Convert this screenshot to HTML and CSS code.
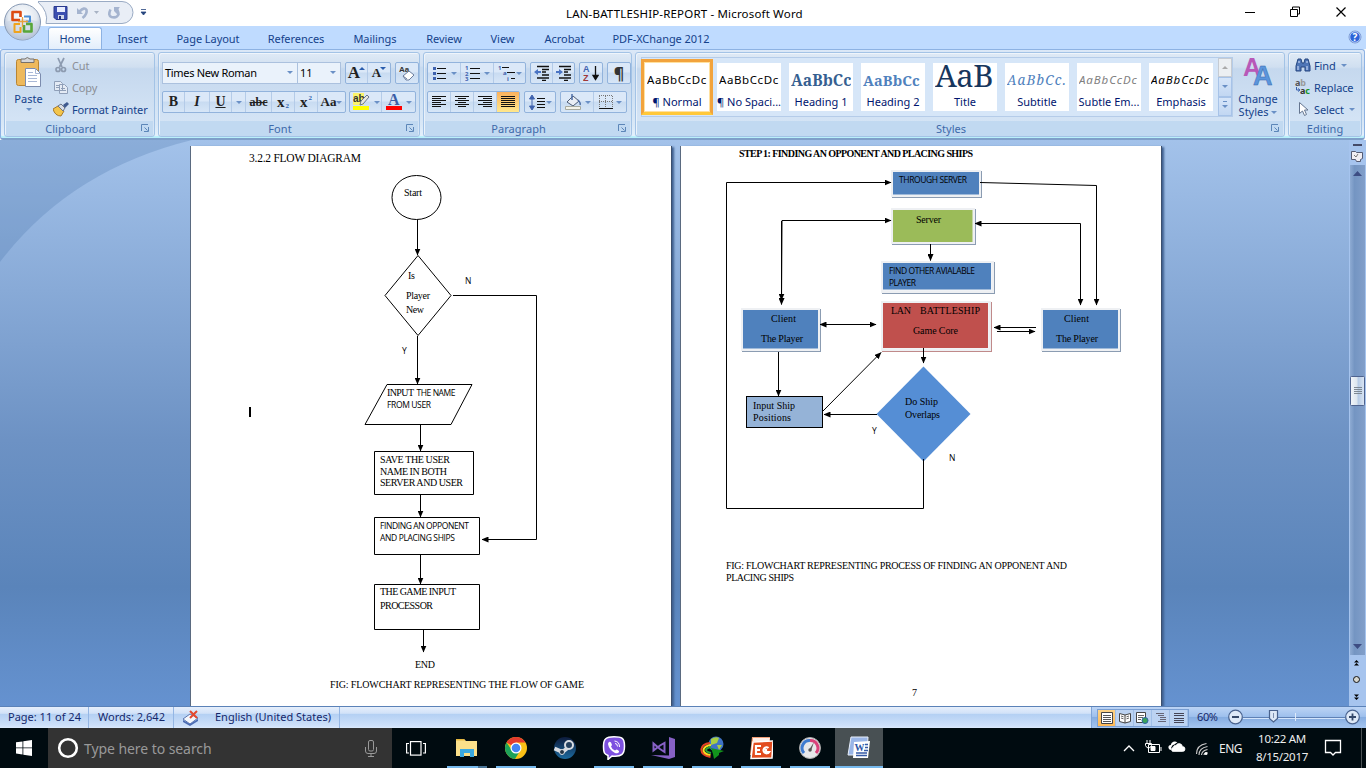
FILE: index.html
```html
<!DOCTYPE html>
<html lang="en">
<head>
<meta charset="utf-8">
<title>LAN-BATTLESHIP-REPORT - Microsoft Word</title>
<link rel="stylesheet" href="styles.css">
</head>
<body>
<div class="app">
  <header class="titlebar">
    <svg class="quick" width="160" height="26" viewBox="0 0 160 26">
      <path d="M38 1.500H122a11 11 0 0 1 0 22H46Q49 12 38 2" fill="#e9eef6" stroke="#9aabc4"/>
      <path d="M54 6.500h13v13h-11l-2-2z" fill="#3c4fb0" stroke="#2a3a8e"/><path d="M57 7h8v5h-8z" fill="#e8edff"/><path d="M58 15h6v4h-6z" fill="#cfd6e8"/><path d="M59 16h2v3h-2z" fill="#26347c"/>
      <path d="M77 8v6h6z" fill="#a5b4cf"/><path d="M79.500 11.500q5-5 7-1.500 1 4-4 8" fill="none" stroke="#a5b4cf" stroke-width="2.600"/>
      <path d="M94 11h5l-2.500 3z" fill="#a8b3c4"/>
      <path d="M110.500 9.500q-3 6 1 7.500 5 1.500 7-2.500 0-4-3-5.500" fill="none" stroke="#a5b4cf" stroke-width="2.600"/><path d="M114 7h6l-1 1-2 6-3-3z" fill="#a5b4cf"/>
      <path d="M141 9.500h5M141 12h5l-2.500 3z" fill="#26457e" stroke="#26457e" stroke-width=".8"/>
    </svg>
    <h1 class="title">LAN-BATTLESHIP-REPORT - Microsoft Word</h1>
    <svg class="winbtns" width="126" height="26" viewBox="1237 0 126 26" fill="none" stroke="#000"><path d="M1242 12.500h10M1287.500 9.500h7v7h-7zM1289.500 9v-2h7v7h-2"/><path d="M1333.500 7.500l9 9M1342.500 7.500l-9 9" stroke-width="1.200"/></svg>
  </header>
  <svg class="orb" width="42" height="42" viewBox="0 0 42 42">
    <defs><radialGradient id="og" cx=".5" cy=".35" r=".65"><stop offset="0" stop-color="#fff"/><stop offset=".6" stop-color="#e3e9f1"/><stop offset="1" stop-color="#9dafc9"/></radialGradient></defs>
    <circle cx="20.500" cy="21" r="18" fill="url(#og)" stroke="#8799b4"/>
    <path d="M3 21q18-6 35 0-2 17-17 18Q5 38 3 21" fill="#c6d2e3" opacity=".55"/>
    <g fill="none" stroke-width="2.600" stroke-linejoin="round"><path d="M18 19h-7.500v-8h8v5" stroke="#dd4b12"/><path d="M22 15.500h6v5h-4" stroke="#4b8ed6" stroke-width="2"/><path d="M18 23h-5.500v8h6v-5" stroke="#f0a31c" stroke-width="2"/><path d="M22 24v6.500h7.500V23H24" stroke="#57a639"/></g>
    <path d="M16 20.500h10M20.500 16v10" stroke="#e7a03a" stroke-width="1.300"/>
  </svg>
  <nav class="tabs">
    <a class="tab active t1">Home</a><a class="tab t2">Insert</a><a class="tab t3">Page Layout</a><a class="tab t4">References</a><a class="tab t5">Mailings</a><a class="tab t6">Review</a><a class="tab t7">View</a><a class="tab t8">Acrobat</a><a class="tab t9">PDF-XChange 2012</a>
    <svg class="help" width="14" height="14" viewBox="0 0 14 14"><circle cx="7" cy="7" r="6" fill="#2c63d8" stroke="#7d9bd0"/><circle cx="7" cy="7" r="5.200" fill="none" stroke="#cfe0ff" stroke-width=".8"/><text x="7" y="10.500" text-anchor="middle" class="qm">?</text></svg>
  </nav>
  <section class="ribbon">
    <div class="group g-clip">
      <div class="body clip">
        <div class="paste">
          <svg width="30" height="32" viewBox="0 0 30 32"><rect x="2.500" y="3.500" width="22" height="26" rx="2" fill="#eeb95c" stroke="#b98533"/><path d="M7 6.500V3h4q2-3 5 0h4v3.500z" fill="#d5d6d8" stroke="#77716a"/><path d="M11.500 12.500h10l5 5v13h-15z" fill="#fff" stroke="#7c8cae"/><path d="M21.500 12.500v5h5M14 16.500h5M14 19.500h9M14 22.500h9M14 25.500h9" fill="none" stroke="#a9b8d6"/></svg>
          <span>Paste</span><i class="dd"></i>
        </div>
        <div class="list">
          <div class="cmd off"><svg width="16" height="16" viewBox="0 0 16 16" fill="none" stroke="#8d9bb0" stroke-width="1.700"><path d="M5 1l4 9M11 1L6.500 10"/><circle cx="5" cy="12.500" r="2"/><circle cx="10.500" cy="12.500" r="2"/></svg><span>Cut</span></div>
          <div class="cmd off"><svg width="16" height="16" viewBox="0 0 16 16" fill="#e4ebf5" stroke="#8f9fb8"><path d="M1.500 2.500h6l2 2v7h-8zM6.500 5.500h5l3 3v6h-8z"/><path d="M3 6.500h3M3 8.500h3M8 9.500h4M8 11.500h5"/></svg><span>Copy</span></div>
          <div class="cmd"><svg width="16" height="16" viewBox="0 0 16 16"><path d="M0 8l5-3 6 5-3 5q-6 0-8-7z" fill="#f3c54b" stroke="#a8792a"/><path d="M5 5l3-2 4 4-2 3z" fill="#d8dde5" stroke="#6a7488"/><path d="M10 4l4-3 2 2-4 4z" fill="#3e5a90"/></svg><span>Format Painter</span></div>
        </div>
      </div>
      <footer>Clipboard<svg class="dlg"><use href="#dl"/></svg></footer>
    </div>
    <div class="group g-font">
      <div class="body rows">
        <div class="row">
          <div class="combo c1"><span>Times New Roman</span><i class="dd"></i></div><div class="combo c2"><span>11</span><i class="dd"></i></div>
          <div class="box m4"><b class="btn ser w22 big">A<i class="dd tri up blue"></i></b><b class="btn ser w22 mid">A<i class="dd tri blue"></i></b></div>
          <div class="box m4"><span class="btn w22"><svg width="18" height="18" viewBox="0 0 18 18"><text x="1" y="8" class="aa">Aa</text><path d="M5 12l6-5 5 4-5 5H8z" fill="#fff" stroke="#6c7d9d"/><path d="M5 12l4 3" stroke="#6c7d9d"/></svg></span></div>
        </div>
        <div class="row">
          <div class="box"><b class="btn ser w22">B</b><b class="btn ser w25 it">I</b><b class="btn ser w22 un">U</b><span class="btn w14"><i class="dd"></i></span><b class="btn ser w26 st">abc</b><b class="btn ser w23">x<sub>2</sub></b><b class="btn ser w23">x<sup>2</sup></b><b class="btn ser w27">Aa<i class="dd"></i></b></div>
          <div class="box m3"><span class="btn w32"><svg width="19" height="18" viewBox="0 0 19 18"><path d="M1 0h11v12H1z" fill="#fbf36b"/><text x="1" y="8.500" class="ab">ab</text><path d="M8 12l1-4 6-6 2 2-6 7z" fill="#e8e8df" stroke="#68758b"/><path d="M1 13h16v4H1z" fill="#ff0"/></svg><i class="dd"></i></span><span class="btn w33"><svg width="18" height="18" viewBox="0 0 18 18"><text x="3" y="12" class="fa">A</text><path d="M1 13h16v4H1z" fill="red"/></svg><i class="dd"></i></span></div>
        </div>
      </div>
      <footer>Font<svg class="dlg"><use href="#dl"/></svg></footer>
    </div>
    <div class="group g-para">
      <div class="body rows">
        <div class="row">
          <div class="box"><span class="btn w33"><svg width="16" height="16" viewBox="0 0 16 16"><path d="M5 3.500h9M5 8.500h9M5 13.500h9" stroke="#111"/><path d="M1 2h3v3H1zM1 7h3v3H1zM1 12h3v3H1z" fill="#3f62ae"/></svg><i class="dd"></i></span><span class="btn w33"><svg width="16" height="16" viewBox="0 0 16 16"><path d="M5 3.500h10M5 8.500h10M5 13.500h10" stroke="#111"/><text class="num" x="0" y="5">1</text><text class="num" x="0" y="10.500">2</text><text class="num" x="0" y="16">3</text></svg><i class="dd"></i></span><span class="btn w31"><svg width="18" height="16" viewBox="0 0 18 16"><path d="M4 2.500h7M9 7.500h8M13 13.500h4" stroke="#111"/><text class="num" x="0" y="5">1</text><text class="num" x="5" y="10">a</text><text class="num" x="9" y="16">i</text></svg><i class="dd"></i></span></div>
          <div class="box m4"><span class="btn w22"><svg width="16" height="16" viewBox="0 0 16 16"><path d="M3 1.500h12M8 4.500h7M8 7h4M8 10h7M3 13h12M8 15.500h4" stroke="#111" stroke-width="1.600"/><path d="M0 7l4-3v2h3v2H4v2z" fill="#4a74c4"/></svg></span><span class="btn w21"><svg width="16" height="16" viewBox="0 0 16 16"><path d="M3 1.500h12M8 4.500h7M8 7h4M8 10h7M3 13h12M8 15.500h4" stroke="#111" stroke-width="1.600"/><path d="M7 7L3 4v2H0v2h3v2z" fill="#4a74c4"/></svg></span></div>
          <div class="box m4"><span class="btn w22"><svg width="16" height="16" viewBox="0 0 16 16"><text x="0" y="7" class="az" fill="#3f62ae">A</text><text x="0" y="16" class="az" fill="#a03838">Z</text><path d="M12.500 1v12M10 10.500l2.500 4 2.500-4z" stroke="#111" stroke-width="1.300"/></svg></span></div>
          <div class="box m4"><span class="btn w22 pil">¶</span></div>
        </div>
        <div class="row">
          <div class="box"><span class="btn w23"><svg class="al" viewBox="0 0 14 12"><path d="M0 .5h14M0 2.500h9M0 4.500h14M0 6.500h9M0 8.500h14M0 10.500h9"/></svg></span><span class="btn w23"><svg class="al" viewBox="0 0 14 12"><path d="M0 .5h14M3 2.500h8M0 4.500h14M3 6.500h8M0 8.500h14M3 10.500h8"/></svg></span><span class="btn w23"><svg class="al" viewBox="0 0 14 12"><path d="M0 .5h14M5 2.500h9M0 4.500h14M5 6.500h9M0 8.500h14M5 10.500h9"/></svg></span><span class="btn w22 on"><svg class="al" viewBox="0 0 14 12"><path d="M0 .5h14M0 2.500h14M0 4.500h14M0 6.500h14M0 8.500h14M0 10.500h14"/></svg></span></div>
          <div class="box m4"><span class="btn w30"><svg width="17" height="17" viewBox="0 0 17 17"><path d="M3 5v7M.5 5L3 1l2.500 4zM.5 12L3 16l2.500-4z" stroke="#3f62ae" fill="#3f62ae"/><path d="M8 4.500h8M8 7.500h8M8 10.500h8M8 13.500h8" stroke="#111"/></svg><i class="dd"></i></span></div>
          <div class="box m4"><span class="btn w33"><svg width="18" height="18" viewBox="0 0 18 18"><path d="M3 9l6-6 6 5-6 5z" fill="#e9eef5" stroke="#4c5a72"/><path d="M8 1v6M14 7q3 3 2 5" fill="none" stroke="#4c6ca5" stroke-width="1.500"/><path d="M1.500 13.500h15v3h-15z" fill="#f3f3ea" stroke="#a8aba0"/></svg><i class="dd"></i></span><span class="btn w32"><svg width="14" height="14" viewBox="0 0 14 14"><path d="M.5 1v12M13.500 1v12M6.500 1v12M0 .5h14M0 6.500h14" stroke="#777" stroke-dasharray="1 1"/><path d="M0 13.500h14" stroke="#111"/></svg><i class="dd"></i></span></div>
        </div>
      </div>
      <footer>Paragraph<svg class="dlg"><use href="#dl"/></svg></footer>
    </div>
    <div class="group g-styles">
      <div class="body styles">
        <div class="gallery">
          <div class="cell sel"><span class="pv">AaBbCcDc</span><span class="nm">¶ Normal</span></div>
          <div class="cell"><span class="pv">AaBbCcDc</span><span class="nm">¶ No Spaci...</span></div>
          <div class="cell"><span class="pv h1">AaBbCc</span><span class="nm">Heading 1</span></div>
          <div class="cell"><span class="pv h2">AaBbCc</span><span class="nm">Heading 2</span></div>
          <div class="cell"><span class="pv ti">AaB</span><span class="nm">Title</span></div>
          <div class="cell"><span class="pv su">AaBbCc.</span><span class="nm">Subtitle</span></div>
          <div class="cell"><span class="pv se">AaBbCcDc</span><span class="nm">Subtle Em...</span></div>
          <div class="cell"><span class="pv em">AaBbCcDc</span><span class="nm">Emphasis</span></div>
          <div class="gscroll"><span class="gray"><i class="dd up"></i></span><span><i class="dd"></i></span><span class="more"><i class="dd"></i></span></div>
        </div>
        <div class="change"><svg width="30" height="30" viewBox="0 0 30 30"><text x="0" y="19" class="ca1">A</text><text x="10" y="28" class="ca2">A</text></svg><span>Change</span><span>Styles <i class="dd"></i></span></div>
      </div>
      <footer>Styles<svg class="dlg"><use href="#dl"/></svg></footer>
    </div>
    <div class="group g-edit">
      <div class="body list edit">
        <div class="cmd"><svg width="16" height="16" viewBox="0 0 16 16"><path d="M3 2h3l1 4h2l1-4h3l2 7v5h-5v-4H6v4H1V9z" fill="#4e75b6" stroke="#264780"/><path d="M3 9v4M12 9v4M4 4v2M12 4v2" stroke="#d7e5ff"/></svg><span>Find</span><i class="dd"></i></div>
        <div class="cmd"><svg width="16" height="16" viewBox="0 0 16 16"><text x="0" y="7" class="rp" fill="#555">a<tspan fill="#999">b</tspan></text><text x="5" y="15" class="rp" fill="#333">a<tspan fill="#18962b">c</tspan></text><path d="M1.500 8v3h3M3 9.500l2 1.500-2 1.500" fill="none" stroke="#3b62ad"/></svg><span>Replace</span></div>
        <div class="cmd"><svg width="16" height="16" viewBox="0 0 16 16"><path d="M4.500 1.500v11l3-2.500 2 4.500 2-1-2-4.500h3.500z" fill="#fff" stroke="#64758f"/></svg><span>Select</span><i class="dd"></i></div>
      </div>
      <footer>Editing</footer>
    </div>
  </section>
  <main class="work">
    <svg class="swoosh" width="680" height="566" viewBox="0 140 680 566" preserveAspectRatio="none"><path d="M0 140H192Q70 170 0 262z" fill="#456fa9" fill-opacity=".25"/></svg>
    <div class="pages">
      <article class="page">
        <svg width="480" height="560" viewBox="191 146 480 560">
          <defs><marker id="ar" viewBox="0 0 7 6" refX="6.500" refY="3" markerWidth="7" markerHeight="6" markerUnits="userSpaceOnUse" orient="auto-start-reverse"><path d="M0 0l7 3-7 3z"/></marker></defs>
          <g class="ln"><ellipse cx="416.500" cy="197.500" rx="24.500" ry="22"/><path d="M418 255.500l33 40-33 40-33-40zM387 384.500h85l-21 40h-86zM374.500 451.500h99v43h-99zM374.500 517.500h105v37h-105zM374.500 584.500h105v45h-105z"/></g>
          <g class="ln ar"><path d="M417.500 220v35"/><path d="M417.500 336v48"/><path d="M453 295.500h83.500v244H482"/><path d="M420.500 425v26"/><path d="M420.500 495v22"/><path d="M420.500 555v29"/><path d="M423.500 630v22"/></g>
          <path d="M250 407v10" stroke="#000" stroke-width="2"/>
          <g class="tx">
            <text class="t11" x="249" y="162" textLength="112">3.2.2 FLOW DIAGRAM</text>
            <text x="404" y="196" textLength="18">Start</text><text x="408" y="279" textLength="7">Is</text><text x="406" y="299" textLength="24">Player</text><text x="406" y="313" textLength="18">New</text>
            <text x="387" y="396" textLength="27">INPUT</text>
            <text x="380" y="463" textLength="70">SAVE THE USER</text><text x="380" y="475" textLength="67">NAME IN BOTH</text><text x="380" y="486" textLength="83">SERVER AND USER</text>
            <text x="380" y="595" textLength="76">THE GAME INPUT</text><text x="380" y="609" textLength="53">PROCESSOR</text><text x="415" y="668" textLength="20">END</text><text x="330" y="688" textLength="254">FIG: FLOWCHART REPRESENTING THE FLOW OF GAME</text>
          </g>
          <g class="sx">
            <text x="465" y="284" textLength="5.500">N</text><text x="402" y="354" textLength="4.500">Y</text>
            <text x="416.500" y="396" textLength="39">THE NAME</text><text x="387" y="408" textLength="44">FROM USER</text><text x="380" y="529" textLength="89">FINDING AN OPPONENT</text><text x="380" y="541" textLength="75">AND PLACING SHIPS</text>
          </g>
        </svg>
      </article>
      <article class="page">
        <svg width="480" height="560" viewBox="681 146 480 560">
          <g class="halo"><rect x="892" y="171" width="88" height="25"/><rect x="892" y="209" width="82" height="34"/><rect x="882" y="262" width="111" height="30"/><rect class="red" x="882" y="302" width="108" height="48"/><rect x="742" y="309" width="77" height="41"/><rect x="1042" y="309" width="77" height="41"/></g>
          <g fill="#4f81bd"><rect x="893" y="172" width="86" height="22.500"/><rect x="893" y="210" width="79.500" height="32" fill="#9bbb59"/><rect x="883" y="263" width="108" height="26.500"/><rect x="883" y="303" width="105" height="45" fill="#c0504d"/><rect x="743" y="310" width="75" height="38.500"/><rect x="1043" y="310" width="75" height="38.500"/></g>
          <path d="M923.500 366.500l47 47.500-47 47.500-47-47.500z" fill="#558ed5"/>
          <rect x="746.500" y="396.500" width="76" height="31" fill="#95b3d7" stroke="#000"/>
          <g class="ln ar"><path d="M923.500 459v49.500h-197v-326H891"/><path d="M980 182.500l116.500 3V305"/><path class="both" d="M781.500 304.500l.5-84h109"/><path d="M781.500 221v79"/><path class="both" d="M975 223.500h105.500V305"/><path d="M930.500 244v16.500"/><path class="both" d="M820 324.500h56"/><path d="M1036 327.500h-42"/><path d="M997 331.500h38"/><path d="M923.500 348v15"/><path d="M778.500 352v44"/><path d="M823 411l58-58.500"/><path d="M877 414.500h-53"/></g>
          <g class="tx">
            <text class="bold" x="739" y="157" textLength="234">STEP 1: FINDING AN OPPONENT AND PLACING SHIPS</text>
            <text x="916" y="223" textLength="25">Server</text><text x="891" y="314" textLength="20">LAN</text><text x="920" y="314" textLength="60">BATTLESHIP</text><text x="913" y="334" textLength="45">Game Core</text>
            <text x="771" y="322" textLength="25">Client</text><text x="761" y="342" textLength="42">The Player</text><text x="1064" y="322" textLength="25">Client</text><text x="1056" y="342" textLength="42">The Player</text>
            <text x="753" y="409" textLength="42">Input Ship</text><text x="753" y="421" textLength="38">Positions</text><text x="905" y="405" textLength="33">Do Ship</text><text x="905" y="418" textLength="35">Overlaps</text>
            <text x="726" y="569" textLength="341">FIG: FLOWCHART REPRESENTING PROCESS OF FINDING AN OPPONENT AND</text><text x="726" y="581" textLength="68">PLACING SHIPS</text><text x="912" y="696">7</text>
          </g>
          <g class="sx"><text x="899" y="183" textLength="68">THROUGH SERVER</text><text x="889" y="274" textLength="86">FIND OTHER AVIALABLE</text><text x="889" y="286" textLength="27">PLAYER</text><text x="872" y="434" textLength="4.500">Y</text><text x="949" y="461" textLength="5.500">N</text></g>
        </svg>
      </article>
    </div>
    <aside class="vscroll">
      <svg width="17" height="566" viewBox="1349 140 17 566">
        <defs><linearGradient id="th"><stop offset="0" stop-color="#f2f6fa"/><stop offset=".45" stop-color="#dde6ee"/><stop offset=".55" stop-color="#b6cbe6"/><stop offset="1" stop-color="#dce7f4"/></linearGradient><linearGradient id="tr"><stop offset="0" stop-color="#8eabd3"/><stop offset=".3" stop-color="#7495c2"/><stop offset="1" stop-color="#829fca"/></linearGradient></defs>
        <path d="M1349 140h17v566h-17z" fill="#a6c4ee"/><path d="M1350 165h15v490h-15z" fill="url(#tr)"/>
        <path d="M1353 144h9v2h-9z" fill="#444a68"/><path d="M1351.500 151.500h4l1 1h6v6l-2 1v2h-4l-1-2h-4z" fill="#f0eef4" stroke="#555b73"/><path d="M1354 155l2 2 2-3" stroke="#777" fill="none"/>
        <path d="M1353 176l4.500-5 4.500 5zM1353 644h9l-4.500 5z" fill="#3d4d83"/>
        <rect x="1350.500" y="376.500" width="14" height="29" rx="1" fill="url(#th)" stroke="#4e638f"/><path d="M1354 387.500h8M1354 389.500h8M1354 391.500h8M1354 393.500h8" stroke="#7d8893"/>
        <path d="M1354 662.500l2.500-2.500 2.500 2.500zM1354 665.500l2.500-2.500 2.500 2.500zM1354 694.500l2.500 2.500 2.500-2.500zM1354 697.500l2.500 2.500 2.500-2.500z"/><circle cx="1356.500" cy="679.500" r="3" fill="#d6d6ce" stroke="#111"/>
      </svg>
    </aside>
  </main>
  <footer class="status">
    <span class="s1">Page: 11 of 24</span><span class="s2">Words: 2,642</span>
    <span class="s3"><svg width="18" height="16" viewBox="0 0 18 16"><path d="M1 9l7-5 8 4-8 6z" fill="#f4f7fc" stroke="#5c77b0"/><path d="M1 10l7 4 8-5v2l-8 5-7-4z" fill="#4a6bb3"/><path d="M8 1l7 7M15 1L8 8" stroke="#e3482f" stroke-width="2"/></svg><span>English (United States)</span></span>
    <div class="views">
      <div class="vbtns"><i class="on"><svg width="12" height="12" viewBox="0 0 12 12"><path d="M.5.500h11v11H.5z" fill="#fff" stroke="#444"/><path d="M2 3.500h8M2 5.500h8M2 7.500h8M2 9.500h8" stroke="#555"/></svg></i><i><svg width="12" height="12" viewBox="0 0 12 12"><path d="M.5 1.500L6 3l5.500-1.500v8L6 11 .5 9.500zM6 3v8" fill="#fff" stroke="#444"/><path d="M2 4l2.500.8M2 6l2.500.8M10 4l-2.500.8M10 6l-2.500.8" stroke="#666"/></svg></i><i><svg width="13" height="12" viewBox="0 0 13 12"><path d="M.5.500h9v10h-9z" fill="#fff" stroke="#444"/><path d="M2 3.500h6M2 5.500h5M2 7.500h3" stroke="#666"/><circle cx="9" cy="8.500" r="3" fill="#3ba35a" stroke="#2d62a5"/></svg></i><i><svg width="12" height="12" viewBox="0 0 12 12"><path d="M1 1.500h8M3 3.500h6M5 5.500h6M5 7.500h6M3 9.500h8" stroke="#667"/></svg></i><i><svg width="12" height="12" viewBox="0 0 12 12"><path d="M1 1.500h10M1 3.500h10M1 6.500h10M1 8.500h10M1 10.500h10" stroke="#445"/></svg></i></div>
      <span class="zoom">60%</span>
      <svg width="142" height="20" viewBox="1224 708 142 20"><path d="M1243 717.500h102" stroke="#5f81b5"/><path d="M1243 718.500h102" stroke="#d3e4fb"/><path d="M1295.500 713v8" stroke="#dfeafa"/><g fill="#dde8f7" stroke="#48618d" stroke-width="1.200"><circle cx="1235.500" cy="717" r="6.800"/><circle cx="1352.500" cy="717" r="6.800"/><path d="M1269.500 710.500h8v8l-4 3.500-4-3.500z"/></g><path d="M1232 717h7M1349 717h7M1352.500 713.500v7" stroke="#354869" stroke-width="1.800"/><path d="M1273.500 713v5" stroke="#7d8fae"/></svg>
    </div>
  </footer>
  <footer class="taskbar">
    <div class="start"><svg width="16" height="16" viewBox="0 0 16 16" fill="#fff"><path d="M0 2.300l6.500-.9v6.100H0zM7.300 1.300L16 0v7.500H7.300zM0 8.300h6.500v6.200L0 13.600zM7.300 8.300H16V16l-8.700-1.300z"/></svg></div>
    <div class="search"><svg width="22" height="22" viewBox="0 0 22 22"><circle cx="11" cy="11" r="8.800" fill="none" stroke="#fff" stroke-width="2.600"/></svg><span>Type here to search</span><svg width="12" height="17" viewBox="0 0 12 17" fill="none" stroke="#999"><rect x="3.500" y=".5" width="5" height="10.500" rx="1.500"/><path d="M.5 7v4q0 2.500 2.500 2.500h6q2.500 0 2.500-2.500V7M6 14v2.500M3 16.500h6"/></svg></div>
    <div class="tview"><svg width="20" height="15" viewBox="0 0 20 15" fill="none" stroke="#fff" stroke-width="1.200"><rect x="4.500" y=".6" width="10.500" height="13.500"/><path d="M3 2.500H.6v9.500H3M17 2.500h2.400v9.500H17"/></svg></div>
    <div class="apps">
      <div class="appi run two"><svg viewBox="0 0 24 24"><path d="M1 3h8l2 2h11v15H1z" fill="#fbe08a"/><path d="M1 3h8l1 1.500H1z" fill="#e6b840"/><path d="M5 21v-8h14v8h-4v-4H9v4z" fill="#3ba9e0"/></svg></div>
      <div class="appi run"><svg viewBox="0 0 24 24"><circle cx="12" cy="12" r="11" fill="#fbc116"/><path d="M12 12L2.500 6.500A11 11 0 0 1 21.500 6.500H12z" fill="#e33b2e"/><path d="M2.500 6.500A11 11 0 0 0 11 23l5.500-9L12 12 7 13z" fill="#1da25a"/><circle cx="12" cy="12" r="5.500" fill="#fff"/><circle cx="12" cy="12" r="4.300" fill="#4285f4"/></svg></div>
      <div class="appi"><svg viewBox="0 0 24 24"><defs><linearGradient id="st" x2="0" y2="1"><stop offset="0" stop-color="#0d1b3c"/><stop offset="1" stop-color="#1c6a9e"/></linearGradient></defs><circle cx="12" cy="12" r="11" fill="url(#st)"/><path d="M1.500 12.500l8 3.500 5-4" stroke="#d8dce2" stroke-width="4" fill="none"/><circle cx="16" cy="9" r="4" fill="#25415f" stroke="#d8dce2" stroke-width="2"/><circle cx="9" cy="16" r="2.500" fill="#234" stroke="#d8dce2"/></svg></div>
      <div class="appi run"><svg viewBox="0 0 24 24"><path d="M12 .8C4 .8 1.500 3 1.500 10s1 8 4.500 9.500V23.500l4-3.500C20 21 22.500 18 22.500 10S20 .8 12 .8z" fill="#7d51e0" stroke="#fff" stroke-width="1.500"/><path d="M7 6q2-1 3 3l-1 1.500q1 3 4 4l1.500-1q3 1 2.500 2.500-1 2-4 1Q7 14 6 8q0-1 1-2z" fill="#fff"/><path d="M12.500 5q5 .5 5 6M13 7.500q2.500 0 2.500 3" fill="none" stroke="#fff"/></svg></div>
      <div class="appi run"><svg viewBox="0 0 24 24"><path d="M18 1l6 2v18l-6 2L0 19l18 .5z" fill="#8661c5"/><path d="M2.500 7.500v7l6.500-5 4.500-2.500v9L9 13z" fill="none" stroke="#8661c5" stroke-width="2"/></svg></div>
      <div class="appi run"><svg viewBox="0 0 24 24"><circle cx="16" cy="8" r="7.500" fill="#3f73c6"/><path d="M11 3q5-3 8-1l-2 5-6 2zM17 9l5 0-3 5z" fill="#a9ce42"/><path d="M10 7Q2 8 1.500 13q-1 6 9 8" fill="none" stroke="#e34123" stroke-width="2"/><path d="M11 9Q4 10 3.500 14q0 4 7 5" fill="none" stroke="#ffda20" stroke-width="2"/><path d="M11 11Q6 12 6 14t5 3" fill="none" stroke="#2aa33a" stroke-width="2"/><path d="M11 12l13 3-5 2v2l-5 4-1-5z" fill="#12931c"/></svg></div>
      <div class="appi run"><svg viewBox="0 0 24 24"><path d="M3 1h18v18H1z" fill="#f3a078"/><path d="M4 2h17l-1 3H4z" fill="#fff0e8"/><path d="M4 6l20-1-1 17-21 .5z" fill="#e34c1e" stroke="#fff" stroke-width="1.500"/><path d="M12 10H7v8h5M7 14h4" fill="none" stroke="#fff" stroke-width="2.200"/><path d="M19.500 12a3 3 0 1 0 .5 4h-3v-3" fill="none" stroke="#fff" stroke-width="2.200"/></svg></div>
      <div class="appi run"><svg viewBox="0 0 24 24"><circle cx="12" cy="12" r="10.500" fill="#e7e7ea" stroke="#aaa"/><path d="M6 17A7.500 7.500 0 0 1 12 4.500" fill="none" stroke="#3e7bd0" stroke-width="3"/><path d="M12 4.500A7.500 7.500 0 0 1 18 17" fill="none" stroke="#d9427b" stroke-width="3"/><path d="M11 14l5-8-3 9z" fill="#555"/><circle cx="12" cy="14" r="1.700" fill="#555"/></svg></div>
      <div class="appi run cur"><svg viewBox="0 0 24 24"><path d="M4 1h17l-1 18H1z" fill="#9ab6e7" stroke="#e9f0fc"/><path d="M7 6l16-1-2 17H6z" fill="#fff"/><path d="M9 17h11M9 19.500h11M18 8.500h3M18 11.500h3M17 14.500h4" stroke="#355aa5" stroke-width="1.300"/><text x="7.500" y="15" class="wd">W</text></svg></div>
    </div>
    <svg class="tray" width="112" height="40" viewBox="1120 728 112 40" fill="none" stroke="#fff"><path d="M1124 751l5-5 5 5" stroke-width="1.300"/><path d="M1148.500 744.500h11v8h-11zM1161 747v4M1147 740v4M1150 740v4M1145.500 743.500h6v2q-1 2.500-3 2.500t-3-2.500zM1148.500 748v4"/><path d="M1151 746.500h4v4h-4z" fill="#fff"/><path d="M1174 751.500h8.500a2.500 2.500 0 0 0 0-5 3.500 3.500 0 0 0-6.500-1.200 3 3 0 0 0-3 2.200 2 2 0 0 0 1 4z" fill="#fff" stroke-width=".7"/><path d="M1171 750a2.500 2.500 0 0 1-.2-5 4 4 0 0 1 6.500-2.500 5 5 0 0 0-2.500 1.700 4 4 0 0 0-3.500 3z" fill="#fff" stroke="none"/><g stroke="#ccc" stroke-width="1.100"><path d="M1196.500 754q0-9 10-10.500M1199 755q0-7 8.500-8.500M1201.500 755q.5-4.500 6-5.500M1204 755q0-2 3.500-2.500"/></g><circle cx="1206" cy="753.500" r="1.500" fill="#fff" stroke="none"/></svg>
    <span class="eng">ENG</span>
    <div class="clock"><span>10:22 AM</span><span>8/15/2017</span></div>
    <svg class="note" width="48" height="40" viewBox="1318 728 48 40" fill="none" stroke="#fff" stroke-width="1.300"><path d="M1325.500 740.500h15v12h-5l-2.500 2.500-2.500-2.500h-5z"/><path d="M1361.500 728v40" stroke="#4a5154" stroke-width="1"/></svg>
  </footer>
</div>
<svg width="0" height="0" class="defs"><defs><symbol id="dl" viewBox="0 0 8 8"><path d="M.5 7V.5H7M3.500 3.500l3 3M7.500 3v4.500H3" fill="none" stroke="#5c86b8"/></symbol></defs></svg>
</body>
</html>
```
FILE: styles.css
```css
* { box-sizing: border-box; }
body { margin: 0; width: 1366px; height: 768px; overflow: hidden; font-family: "Noto Sans", sans-serif; font-size: 11px; color: #15428b; }
.app { display: flex; flex-direction: column; height: 768px; position: relative; }
.defs { position: absolute; }
svg { display: block; flex: none; }
.titlebar { height: 26px; background: #fff; display: flex; align-items: center; }
.title { margin: 0 0 0 406px; font-size: 11.500px; font-weight: 400; color: #000; letter-spacing: .17px; white-space: nowrap; }
.winbtns { margin-left: auto; }
.orb { position: absolute; left: 2px; top: 1px; z-index: 2; }
.tabs { height: 23px; background: #bfdbff; display: flex; align-items: flex-end; padding-left: 48px; }
.tab { height: 22px; line-height: 23px; text-align: center; white-space: nowrap; letter-spacing: -.05px; }
.t1 { width: 54px; } .t2 { width: 61px; } .t3 { width: 90px; } .t4 { width: 86px; } .t5 { width: 72px; } .t6 { width: 66px; } .t7 { width: 51px; } .t8 { width: 73px; } .t9 { width: 120px; }
.active { background: linear-gradient(#fff, #e3eefb); border: 1px solid #8db2e3; border-bottom: 0; border-radius: 3px 3px 0 0; line-height: 21px; }
.help { margin: 0 4px 5px auto; }
.qm { font: bold 10px "Noto Sans", sans-serif; fill: #fff; }
.ribbon { height: 91px; background: linear-gradient(#dbe8f7, #d0e0f3 18%, #c7daef 20%, #d9e8f7 85%, #e5f2fd); border: 1px solid #8db2e3; border-bottom: 2px solid #7e9fc9; border-radius: 3px; box-shadow: inset 0 -2px #b9f0fa; padding: 2px 0 0 3px; display: flex; gap: 3px; margin-right: 1px; }
.group { height: 85px; border: 1px solid #a3c3e6; border-radius: 3px; background: linear-gradient(#dfeaf6, #d0dff0 17%, #c5d8ee 19%, #d8e7f7); display: flex; flex-direction: column; box-shadow: inset 1px 1px rgba(255,255,255,.5); flex: none; }
.g-clip { width: 151px; } .g-font { width: 262px; } .g-para { width: 209px; } .g-styles { width: 650px; } .g-edit { width: 74px; }
.body { height: 68px; }
.group footer { height: 15px; background: #c1d9f1; color: #3e6aaa; text-align: center; line-height: 16px; position: relative; letter-spacing: .05px; margin: 0 1px; padding-right: 18px; }
.group.g-edit footer { padding-right: 0; }
.dlg { position: absolute; right: 4px; top: 3px; width: 8px; height: 8px; }
.clip { display: flex; }
.paste { width: 47px; padding-top: 3px; display: flex; flex-direction: column; align-items: center; line-height: 16px; }
.paste span { margin-top: 3px; }
.list { display: flex; flex-direction: column; padding: 1px 0 0 1px; }
.cmd { display: flex; align-items: center; height: 22px; gap: 3px; white-space: nowrap; letter-spacing: -.13px; }
.cmd .dd { margin-left: 2px; }
.off { color: #8b8f96; }
.edit { padding-left: 6px; }
.dd { display: inline-block; width: 0; height: 0; border: 3px solid transparent; border-bottom: 0; border-top: 3px solid #6a90c6; flex: none; }
.up { border-top: 0; border-bottom: 3px solid #aaa; }
.blue { border-top-color: #2b5dad; }
.blue.up { border-bottom-color: #2b5dad; }
.paste .dd { margin-top: 1px; }
.rows { padding: 9px 3px 0; display: flex; flex-direction: column; gap: 7px; }
.row { display: flex; height: 22px; }
.box { display: flex; height: 22px; border: 1px solid #92b3dc; border-radius: 2px; background: linear-gradient(#dbe8f8 45%, #c8dbf1 50%, #d7e6f7); flex: none; }
.m4 { margin-left: 4px; } .m3 { margin-left: 3px; }
.btn { display: flex; align-items: center; justify-content: center; gap: 3px; border-right: 1px solid #b4cbe8; white-space: nowrap; flex: none; }
.btn:last-child { border-right: 0; }
.w14{width:14px}.w21{width:21px}.w22{width:22px}.w23{width:23px}.w25{width:25px}.w26{width:26px}.w27{width:27px}.w30{width:30px}.w31{width:31px}.w32{width:32px}.w33{width:33px}
.w27, .w31, .w30 { gap: 0; }
.ser { font-family: "Liberation Serif", serif; font-size: 14px; color: #222; }
.w27 { font-size: 13px; }
.w23.ser { font-size: 15px; gap: 1px; }
.ser sub, .ser sup { font-size: 7px; color: #2b5dad; line-height: 1; }
.ser sup { align-self: flex-start; margin-top: 3px; }
.ser sub { align-self: flex-end; margin-bottom: 2px; }
.big { font-size: 17px; gap: 0; } .mid { font-size: 13px; gap: 0; }
.tri { align-self: flex-start; margin-top: 4px; margin-left: -1px; }
.it { font-style: italic; } .un { text-decoration: underline; } .st { text-decoration: line-through; font-size: 12px; }
.combo { height: 22px; border: 1px solid #abc1de; background: #eaf2fb; color: #000; display: flex; align-items: center; justify-content: space-between; padding: 0 4px 2px 2px; letter-spacing: -.3px; flex: none; }
.c1 { width: 136px; } .c2 { width: 43px; border-left: 0; letter-spacing: 0; }
.on { background: linear-gradient(#fbb15d, #fdc76f 40%, #ffe78c); }
.al { width: 14px; height: 12px; stroke: #111; fill: none; }
.aa { font: bold 8px "Liberation Sans", sans-serif; fill: #333; }
.ab { font: bold 10px "Liberation Sans", sans-serif; fill: #333; }
.fa { font: bold 16px "Liberation Serif", serif; fill: #3b5fa7; }
.num { font: bold 6px "Noto Sans", sans-serif; fill: #3f62ae; }
.az { font: bold 9px "Liberation Sans", sans-serif; }
.pil { font-size: 16px; font-weight: bold; color: #333; line-height: 20px; }
.rp { font: bold 9px "Noto Sans", sans-serif; }
.styles { display: flex; padding: 4px 0 0 5px; }
.gallery { display: flex; width: 592px; height: 60px; border: 1px solid #b5cce9; background: #d6e6f8; flex: none; }
.cell { width: 64px; height: 48px; margin: 5px 0 0 8px; background: #fff; overflow: hidden; display: flex; flex-direction: column; align-items: center; flex: none; }
.cell.sel { width: 72px; height: 56px; margin: 1px -4px 0 -1px; border: 3px solid #f2a33c; border-bottom-color: #ffc83a; box-shadow: inset 0 0 0 1px #ffe1a0; padding-top: 1px; }
.pv { height: 30px; line-height: 34px; font-size: 11.500px; letter-spacing: .6px; color: #000; white-space: nowrap; width: 60px; overflow: hidden; flex: none; }
.nm { color: #00156e; letter-spacing: .02px; white-space: nowrap; line-height: 17px; }
.h1, .h2, .su, .ti { font-family: "Noto Serif", "DejaVu Serif", serif; }
.h1 { font-size: 15.500px; font-weight: bold; color: #365f91; letter-spacing: .1px; }
.h2 { font-size: 14.500px; font-weight: bold; color: #4f81bd; letter-spacing: .1px; }
.ti { font-size: 31px; color: #17365d; line-height: 25px; letter-spacing: -.5px; }
.su { font-size: 13.500px; color: #4f81bd; font-style: italic; letter-spacing: 1.100px; }
.se, .em { font-style: italic; letter-spacing: .9px; } .se { color: #808080; }
.gscroll { width: 14px; margin-left: auto; display: flex; flex-direction: column; }
.gscroll span { flex: 1; border: 1px solid #a7c3e8; display: flex; align-items: center; justify-content: center; background: linear-gradient(#d6e5f9, #c2d7f2); }
.gscroll .gray { background: #eceff2; border-color: #c5cbd3; }
.more .dd { box-shadow: 0 -5px 0 -1px #6a90c6; }
.change { width: 50px; display: flex; flex-direction: column; align-items: center; line-height: 13px; margin-left: 0; }
.change svg { margin-bottom: 5px; }
.change .dd { vertical-align: 2px; }
.ca1 { font: bold 25px "Liberation Sans", sans-serif; fill: #b859b8; }
.ca2 { font: bold 27px "Liberation Sans", sans-serif; fill: #5b95dc; stroke: #3568ac; stroke-width: .5px; }
.work { height: 566px; position: relative; display: flex; background: linear-gradient(#a3c2ea, #6d92c4 53%, #5a84ba 79%, #6592d0); overflow: hidden; }
.swoosh { position: absolute; left: 0; top: 0; }
.pages { position: relative; display: flex; gap: 10px; padding: 6px 0 0 191px; width: 1349px; }
.page { width: 480px; height: 560px; background: #fff; box-shadow: -1px 0 #5a6a80, 1px 0 #3c506f, 3px 1px 2px #40608f; flex: none; }
.vscroll { width: 17px; position: relative; }
.ln { fill: none; stroke: #000; stroke-width: 1; }
.ar path { marker-end: url(#ar); }
.ar .both { marker-start: url(#ar); }
.tx { font: 10px "Liberation Serif", serif; fill: #000; }
.t11 { font-size: 11.500px; }
.bold { font-weight: bold; }
.sx { font: 8.500px "Open Sans", sans-serif; fill: #000; }
.halo { fill: #f1f3f6; stroke: #eef0f3; stroke-width: 2px; }
.halo rect { filter: drop-shadow(1px 1.500px .3px #8b9cb2); }
.halo .red { filter: drop-shadow(1px 1.500px .3px #c08a8a); }
.status { height: 22px; border-top: 1px solid #5b82b8; background: linear-gradient(#e6effb, #d2e2f8 30%, #b4d0f3 35%, #cfe1fa 90%, #dceafc); display: flex; align-items: stretch; line-height: 20px; color: #15286b; letter-spacing: 0; }
.status > span { border-right: 1px solid #94b6e4; white-space: nowrap; }
.s1 { width: 89px; padding-left: 8px; } .s2 { width: 85px; padding-left: 9px; }
.s3 { width: 166px; display: flex; align-items: center; gap: 15px; padding-left: 8px; }
.s3 span { padding-bottom: 1px; }
.views { margin-left: auto; width: 275px; border-left: 1px solid #7fa4d6; background: linear-gradient(#bcd4f5, #9ec0ed 45%, #86ade1 50%, #a5c5f0); display: flex; align-items: center; }
.vbtns { display: flex; margin-left: 5px; width: 92px; height: 18px; border: 1px solid #7a9fd3; background: #bcd3f2; }
.vbtns i { width: 18px; display: flex; align-items: center; justify-content: center; border-right: 1px solid #a0bfe7; }
.vbtns i.on { background: linear-gradient(#fcd286, #ffb957); }
.zoom { width: 35px; padding: 0 0 1px 8px; letter-spacing: -.4px; }
.taskbar { height: 40px; background: #000b10; display: flex; align-items: center; color: #eee; }
.start { width: 48px; display: flex; justify-content: center; }
.search { width: 344px; height: 40px; background: #333; display: flex; align-items: center; padding: 0 15px 0 9px; gap: 5px; color: #999; font-size: 14px; letter-spacing: -.07px; }
.search span { flex: 1; }
.tview { width: 51px; padding-left: 14px; }
.apps { display: flex; gap: 1px; flex: 1; }
.appi { width: 48px; height: 40px; display: flex; align-items: center; justify-content: center; }
.appi svg { width: 24px; height: 24px; }
.run { background: linear-gradient(#76b9ed, #76b9ed) 4px 38px / 40px 2px no-repeat; }
.two { background: linear-gradient(90deg, #76b9ed 31px, #4a7597 31px) 4px 38px / 40px 2px no-repeat; }
.cur { background-color: #485053; background-position: 0 38px; background-size: 48px 2px; }
.wd { font: bold 10px "Liberation Serif", serif; fill: #2f57a5; }
.eng { width: 22px; margin-left: -13px; font-size: 12px; letter-spacing: -.5px; }
.clock { width: 72px; margin-left: 5px; display: flex; flex-direction: column; align-items: center; font-size: 11.500px; line-height: 18px; letter-spacing: -.3px; }
```
